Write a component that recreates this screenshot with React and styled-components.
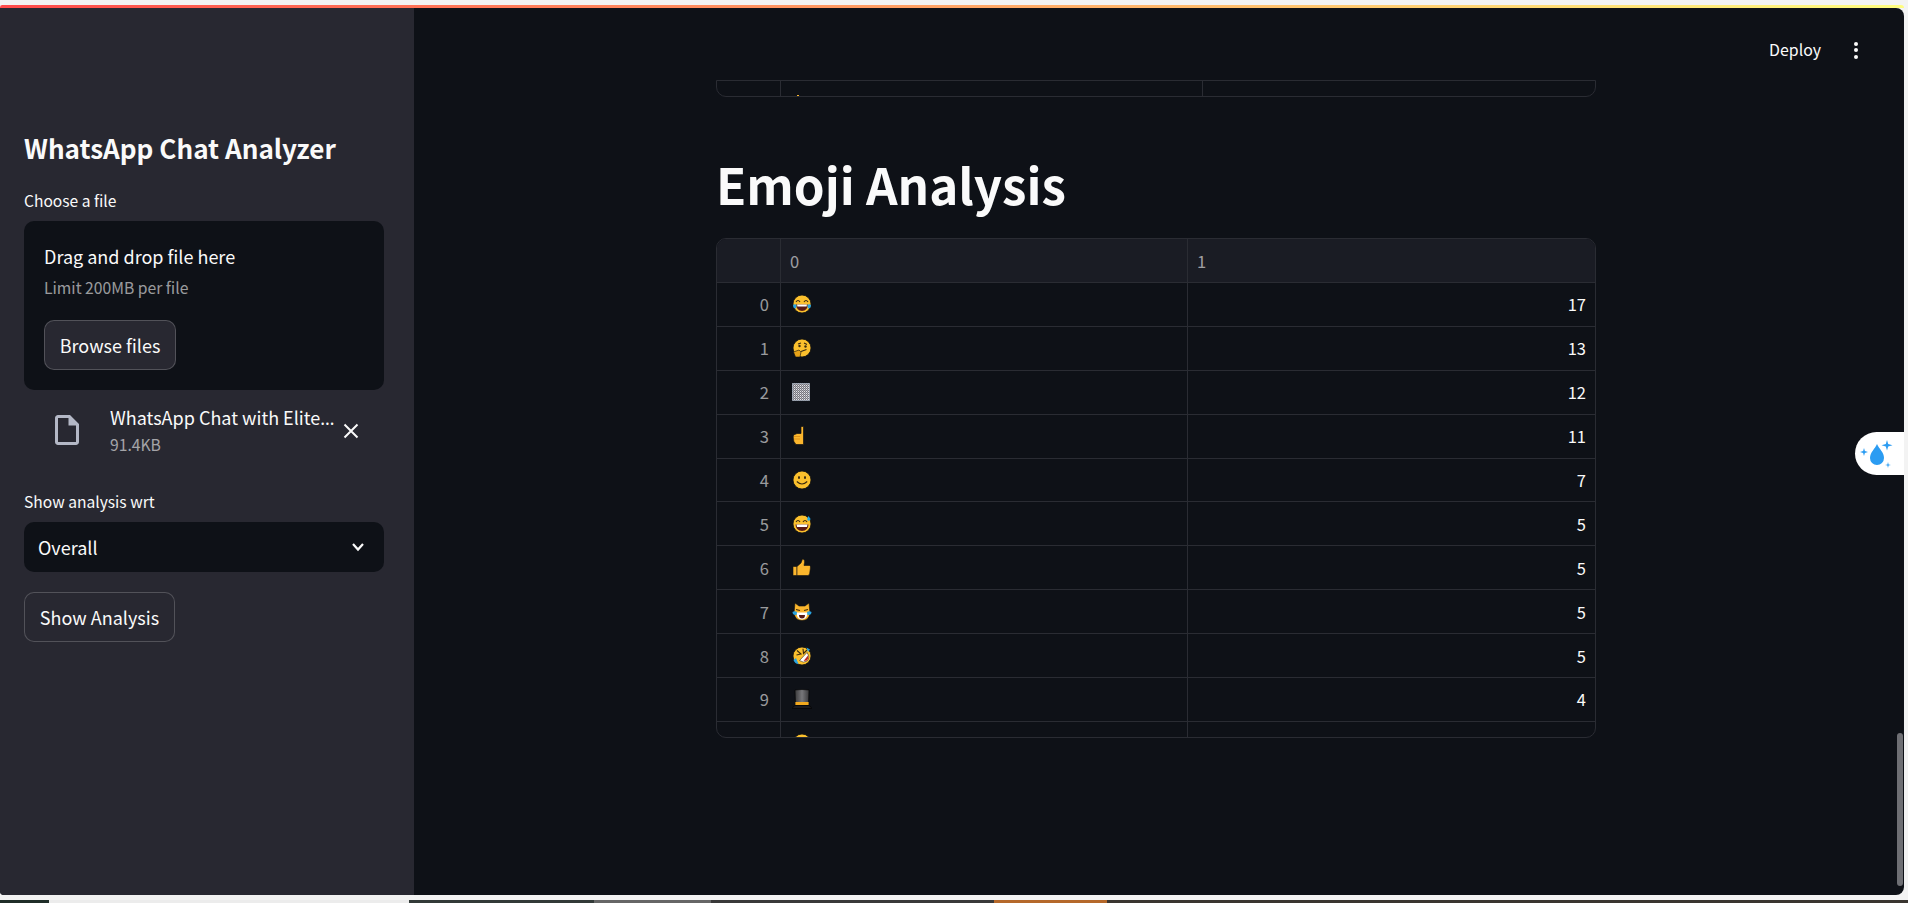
import React from "react";
import styled, { createGlobalStyle } from "styled-components";

const FONT = `"Noto Sans CJK SC", "Noto Sans", sans-serif`;

const GlobalStyle = createGlobalStyle`
  html, body {
    margin: 0;
    padding: 0;
    height: 903px;
    overflow: hidden;
    background: #f3f3f3;
  }
  * { box-sizing: border-box; }
`;

const Face = ({ children, fill = "#fbc02d" }) => (
  <svg width="20" height="20" viewBox="0 0 20 20">
    <circle cx="10" cy="10" r="9" fill={fill} stroke="#111" strokeWidth="0.8" />
    {children}
  </svg>
);

const JoyEmoji = () => (
  <Face>
    <path d="M4 8 Q6 5 8 8M12 8 Q14 5 16 8" stroke="#3a2a10" strokeWidth="1.2" fill="none" />
    <path d="M4 10.5 H16 Q15.5 17 10 17 Q4.5 17 4 10.5Z" fill="#5a1a14" />
    <path d="M5 10.5 H15 L14.6 12.5 H5.4Z" fill="#fff" />
    <path d="M1 11 Q3 9.6 4.6 11 L4 14.5 Q1 14.5 1 11ZM19 11 Q17 9.6 15.4 11 L16 14.5 Q19 14.5 19 11Z" fill="#29a3e0" />
  </Face>
);

const ThinkingEmoji = () => (
  <Face>
    <path d="M6 6 L9 5M12 5 L15 6.5" stroke="#3a2a10" strokeWidth="1.1" fill="none" />
    <circle cx="7.5" cy="8" r="1.2" fill="#3a2a10" />
    <circle cx="13.5" cy="8.5" r="1.2" fill="#3a2a10" />
    <path d="M9 13.5 L14.5 11.5" stroke="#3a2a10" strokeWidth="1.2" />
    <path d="M1.5 14 L7 12 L9 14 L8 19 L3.5 19Z" fill="#e8a317" stroke="#111" strokeWidth="0.6" />
  </Face>
);

const TofuEmoji = () => (
  <svg width="18" height="18" viewBox="0 0 18 18">
    <defs>
      <pattern id="tofu" width="2" height="2" patternUnits="userSpaceOnUse">
        <rect width="2" height="2" fill="#77777c" />
        <rect width="1" height="1" fill="#e4e4ea" />
        <rect x="1" y="1" width="1" height="1" fill="#a9a9b2" />
      </pattern>
    </defs>
    <rect x="0.5" y="0.5" width="17" height="17" fill="url(#tofu)" stroke="#dbe8fa" strokeDasharray="1 1" />
  </svg>
);

const PointUpEmoji = () => (
  <svg width="20" height="20" viewBox="0 0 20 20">
    <path d="M9 0.5 H11.5 V18.5 H4 Q1 16 1.2 11 L1.5 9 L5 7.5 L9 7.5Z" fill="#fbb62d" stroke="#111" strokeWidth="0.7" />
    <path d="M2 10.5 H8M2 13 H8" stroke="#d98a14" strokeWidth="0.8" />
  </svg>
);

const SmileEmoji = () => (
  <Face>
    <ellipse cx="7" cy="7.5" rx="1" ry="1.6" fill="#3a2a10" />
    <ellipse cx="13" cy="7.5" rx="1" ry="1.6" fill="#3a2a10" />
    <path d="M4.8 11.5 Q10 16.5 15.2 11.5" stroke="#3a2a10" strokeWidth="1.1" fill="none" />
  </Face>
);

const SweatEmoji = () => (
  <Face>
    <path d="M4 8 Q6 5 8 8M11 8 Q13 5 15 8" stroke="#3a2a10" strokeWidth="1.2" fill="none" />
    <path d="M3.5 10.5 H16.5 Q16 17 10 17 Q4 17 3.5 10.5Z" fill="#5a1a14" />
    <path d="M4.5 10.5 H15.5 L15 13 H5Z" fill="#fff" />
    <path d="M16.5 2 L18.6 5 Q18 7 16.3 6.8 Q14.8 6 15.3 4.4Z" fill="#1fa8e8" />
  </Face>
);

const ThumbEmoji = () => (
  <svg width="20" height="20" viewBox="0 0 20 20">
    <path d="M1 8.5 H5 V17.5 H1Z" fill="#fbb62d" stroke="#111" strokeWidth="0.6" />
    <path d="M5 8.5 L9 5 L10.5 1 Q13 1 12.5 4.5 L12 7.5 H17.5 Q18.8 8 18.4 10 L17.6 16 Q17 17.5 15.5 17.5 H5Z" fill="#fbb62d" stroke="#111" strokeWidth="0.6" />
  </svg>
);

const CatEmoji = () => (
  <svg width="20" height="20" viewBox="0 0 20 20">
    <path d="M3 1 L7 4 H13 L17 1 L18 11 Q17 18.5 10 18.5 Q3 18.5 2 11Z" fill="#fbb62d" stroke="#111" strokeWidth="0.6" />
    <path d="M4 7.5 L8 8.5M16 7.5 L12 8.5" stroke="#3a2a10" strokeWidth="1.1" />
    <path d="M4.5 10.5 H15.5 Q15 17.5 10 17.5 Q5 17.5 4.5 10.5Z" fill="#fff" />
    <path d="M7 13 H13 Q13 16.5 10 16.5 Q7 16.5 7 13Z" fill="#5a1a14" />
    <path d="M0.5 10 Q2.5 8.6 5 10 L4.5 13 Q0.5 13.5 0.5 10ZM19.5 10 Q17.5 8.6 15 10 L15.5 13 Q19.5 13.5 19.5 10Z" fill="#29a3e0" />
  </svg>
);

const RoflEmoji = () => (
  <Face>
    <path d="M5 4.5 L9 8 L4.5 9M11 2.8 L11.5 7.5 L15 4" stroke="#3a2a10" strokeWidth="1.1" fill="none" />
    <path d="M7.5 14.5 L15 6.5 Q18.5 11.5 15 15 Q11.5 17.5 7.5 14.5Z" fill="#fff" stroke="#3a2a10" strokeWidth="0.6" />
    <path d="M11.5 15 L16 9.5 Q17 12.5 15 14.5Z" fill="#c0281e" />
    <path d="M1.5 14 L4 12 L6.5 18 Q3 18 1.5 14ZM14.5 1.5 L18 3.5 L16 6Z" fill="#29a3e0" />
  </Face>
);

const HatEmoji = () => (
  <svg width="20" height="20" viewBox="0 0 20 20">
    <defs>
      <linearGradient id="hatBody" x1="0" x2="1" y1="0" y2="0">
        <stop offset="0" stopColor="#3a3a3c" />
        <stop offset="0.5" stopColor="#77777a" />
        <stop offset="1" stopColor="#3a3a3c" />
      </linearGradient>
    </defs>
    <path d="M3 1 Q10 0 17 1 L16.5 16.5 H3.5Z" fill="url(#hatBody)" stroke="#000" strokeWidth="0.6" />
    <rect x="3.4" y="13" width="13.2" height="3" fill="#f2a91e" />
    <path d="M0.3 19.5 Q1 16.8 3.5 16.5 H16.5 Q19 16.8 19.7 19.5Z" fill="#1b1b1e" stroke="#000" strokeWidth="0.6" />
  </svg>
);

const EMOJIS = [
  { icon: <JoyEmoji />, count: 17 },
  { icon: <ThinkingEmoji />, count: 13 },
  { icon: <TofuEmoji />, count: 12 },
  { icon: <PointUpEmoji />, count: 11 },
  { icon: <SmileEmoji />, count: 7 },
  { icon: <SweatEmoji />, count: 5 },
  { icon: <ThumbEmoji />, count: 5 },
  { icon: <CatEmoji />, count: 5 },
  { icon: <RoflEmoji />, count: 5 },
  { icon: <HatEmoji />, count: 4 },
];

const TASKBAR = [
  { width: 49, color: "#1f2d28" },
  { width: 360, color: "#ececec" },
  { width: 185, color: "#323a38" },
  { width: 117, color: "#666666" },
  { width: 283, color: "#393939" },
  { width: 113, color: "#b5682a" },
  { width: 801, color: "#3a3530" },
];

const App = () => {
  return (
    <Page>
      <GlobalStyle />
      <Decoration />
      <Shell>
        <Sidebar>
          <SideTitle>WhatsApp Chat Analyzer</SideTitle>
          <FieldLabel $top={22}>Choose a file</FieldLabel>
          <DropBox>
            <DropTitle>Drag and drop file here</DropTitle>
            <DropHint>Limit 200MB per file</DropHint>
            <ActionButton $top={22} $width={132}>Browse files</ActionButton>
          </DropBox>
          <FileRow>
            <svg width="36" height="36" viewBox="0 0 24 24" fill="#b4b8c6">
              <path d="M14 2H6c-1.1 0-1.99.9-1.99 2L4 20c0 1.1.89 2 1.99 2H18c1.1 0 2-.9 2-2V8l-6-6zM6 20V4h7v5h5v11H6z" />
            </svg>
            <FileInfo>
              <FileName>WhatsApp Chat with Elite<Dots>…</Dots></FileName>
              <FileSize>91.4KB</FileSize>
            </FileInfo>
            <svg width="16" height="16" viewBox="0 0 16 16" fill="none">
              <path d="M1.5 1.5 L14.5 14.5M14.5 1.5 L1.5 14.5" stroke="#fafafa" strokeWidth="2" />
            </svg>
          </FileRow>
          <FieldLabel $top={36}>Show analysis wrt</FieldLabel>
          <SelectBox>
            Overall
            <svg width="14" height="10" viewBox="0 0 14 10" fill="none">
              <path d="M2 2 L7 7.5 L12 2" stroke="#fafafa" strokeWidth="2.2" />
            </svg>
          </SelectBox>
          <ActionButton $top={20} $width={151}>Show Analysis</ActionButton>
        </Sidebar>
        <Main>
          <Toolbar>
            <DeployText>Deploy</DeployText>
            <DotsMenu>
              <i />
              <i />
              <i />
            </DotsMenu>
          </Toolbar>
          <Content>
            <TableTail>
              <TailCell $width={64} />
              <TailCell $width={422}>
                <TailSpeck />
              </TailCell>
              <TailCell $width={394} $last />
            </TableTail>
            <Heading>Emoji Analysis</Heading>
            <DataTable>
              <HeaderRow>
                <Cell />
                <HeaderCell>0</HeaderCell>
                <HeaderCell $last>1</HeaderCell>
              </HeaderRow>
              {EMOJIS.map((row, index) => (
                <Row key={index}>
                  <IndexCell>{index}</IndexCell>
                  <EmojiCell>{row.icon}</EmojiCell>
                  <CountCell>{row.count}</CountCell>
                </Row>
              ))}
              <Row>
                <IndexCell />
                <EmojiCell><SmileEmoji /></EmojiCell>
                <CountCell />
              </Row>
            </DataTable>
          </Content>
          <FloatWidget>
            <svg width="36" height="30" viewBox="0 0 36 30">
              <path d="M19 5 C21 10 26 13 26 19 A7 7 0 0 1 12 19 C12 13 17 10 19 5Z" fill="#2b9cf2" />
              <path d="M29 1 L30.2 5 L34.5 6.2 L30.2 7.5 L29 11.5 L27.8 7.5 L23.5 6.2 L27.8 5Z" fill="#2b9cf2" />
              <path d="M6 9 L6.9 12.1 L10 13 L6.9 13.9 L6 17 L5.1 13.9 L2 13 L5.1 12.1Z" fill="#2b9cf2" />
              <path d="M30 23 L30.6 25.4 L33 26 L30.6 26.6 L30 29 L29.4 26.6 L27 26 L29.4 25.4Z" fill="#2b9cf2" />
            </svg>
          </FloatWidget>
          <ScrollThumb />
        </Main>
      </Shell>
      <Taskbar>
        {TASKBAR.map((item, index) => (
          <TaskItem key={index} $width={item.width} $color={item.color} />
        ))}
      </Taskbar>
    </Page>
  );
};

export default App;

const Page = styled.div`
  width: 1908px;
  height: 903px;
  display: flex;
  flex-direction: column;
  padding: 5px 4px 0 0;
  background: #f3f3f3;
  font-family: ${FONT};
  color: #fafafa;
`;

const Decoration = styled.div`
  height: 3px;
  flex-shrink: 0;
  border-radius: 8px 10px 0 0;
  background: linear-gradient(90deg, #ff4b4b, #fffd80);
`;

const Shell = styled.div`
  height: 887px;
  flex-shrink: 0;
  display: flex;
  background: #0e1117;
  border-radius: 0 8px 8px 4px;
  overflow: hidden;
`;

const Sidebar = styled.aside`
  width: 414px;
  flex-shrink: 0;
  padding: 120px 30px 0 24px;
  background: #282831;
`;

const SideTitle = styled.h2`
  margin: 0;
  font-size: 26.1px;
  line-height: 40px;
  font-weight: 600;
  color: #fafafa;
`;

const FieldLabel = styled.div`
  margin-top: ${p => p.$top}px;
  margin-bottom: 11px;
  font-size: 15.6px;
  line-height: 20px;
  color: #fafafa;
`;

const DropBox = styled.div`
  height: 169px;
  padding: 23px 20px 20px;
  background: #0e1117;
  border-radius: 10px;
`;

const DropTitle = styled.div`
  font-size: 18px;
  line-height: 24px;
`;

const DropHint = styled.div`
  margin-top: 10px;
  font-size: 15.7px;
  line-height: 20px;
  color: rgba(250, 250, 250, 0.6);
`;

const ActionButton = styled.button`
  display: block;
  width: ${p => p.$width}px;
  height: 50px;
  margin-top: ${p => p.$top}px;
  padding: 0 0 1px;
  font-family: inherit;
  font-size: 18px;
  color: #fafafa;
  background: #282831;
  border: 1px solid rgba(250, 250, 250, 0.2);
  border-radius: 10px;
`;

const FileRow = styled.div`
  display: flex;
  align-items: center;
  height: 49px;
  margin-top: 16px;
  padding-left: 25px;

  svg:first-child {
    flex-shrink: 0;
    margin-right: 25px;
    margin-top: -2px;
  }

  svg:last-child {
    flex-shrink: 0;
    margin-left: 5px;
    margin-top: 1px;
  }
`;

const FileInfo = styled.div`
  width: 228px;
  min-width: 0;
  padding-bottom: 2px;
`;

const FileName = styled.div`
  font-size: 18px;
  line-height: 24px;
  white-space: nowrap;
  overflow: hidden;
`;

const Dots = styled.span`
  font-family: "Noto Sans", sans-serif;
`;

const FileSize = styled.div`
  margin-top: 5px;
  font-size: 15.7px;
  line-height: 20px;
  color: rgba(250, 250, 250, 0.6);
`;

const SelectBox = styled.div`
  display: flex;
  align-items: center;
  justify-content: space-between;
  height: 50px;
  padding: 0 19px 1px 14px;
  font-size: 18px;
  background: #0e1117;
  border-radius: 10px;
`;

const Main = styled.main`
  position: relative;
  flex: 1;
  min-width: 0;
`;

const Toolbar = styled.div`
  position: absolute;
  top: 27px;
  right: 46px;
  display: flex;
  align-items: center;
  gap: 33px;
  height: 30px;
`;

const DeployText = styled.span`
  padding-bottom: 2px;
  font-size: 15.9px;
  color: #fafafa;
`;

const DotsMenu = styled.div`
  display: flex;
  flex-direction: column;
  gap: 2.5px;

  i {
    display: block;
    width: 4px;
    height: 4px;
    border-radius: 50%;
    background: #fafafa;
  }
`;

const Content = styled.div`
  width: 880px;
  margin: 0 0 0 302px;
  padding-top: 72px;
`;

const TableTail = styled.div`
  display: flex;
  height: 17px;
  border: 1px solid #2a2c33;
  border-radius: 0 0 10px 10px;
`;

const TailCell = styled.div`
  position: relative;
  flex: ${p => (p.$last ? 1 : "none")};
  width: ${p => p.$width}px;
  border-right: ${p => (p.$last ? "none" : "1px solid #2a2c33")};
`;

const TailSpeck = styled.span`
  position: absolute;
  left: 16px;
  bottom: 0;
  width: 2px;
  height: 1px;
  background: #fbb62d;
`;

const Heading = styled.h1`
  margin: 52px 0 0;
  height: 89px;
  font-size: 49.3px;
  line-height: 70px;
  font-weight: 700;
  color: #fafafa;
`;

const DataTable = styled.div`
  height: 500px;
  overflow: hidden;
  border: 1px solid #2a2c33;
  border-radius: 10px;
`;

const Row = styled.div`
  display: grid;
  grid-template-columns: 64px 407px 1fr;
  height: 43.9px;
  border-bottom: 1px solid #2a2c33;
`;

const HeaderRow = styled(Row)`
  height: 44px;
  background: #1a1c24;
`;

const Cell = styled.div`
  display: flex;
  align-items: center;
  min-width: 0;
  font-size: 16.5px;
  border-right: 1px solid #2a2c33;
`;

const HeaderCell = styled(Cell)`
  padding-left: 9px;
  color: rgba(250, 250, 250, 0.6);
  border-right: ${p => (p.$last ? "none" : "1px solid #2a2c33")};
`;

const IndexCell = styled(Cell)`
  justify-content: flex-end;
  padding-right: 11px;
  color: rgba(250, 250, 250, 0.6);
`;

const EmojiCell = styled(Cell)`
  padding-left: 11px;
`;

const CountCell = styled(Cell)`
  justify-content: flex-end;
  padding-right: 9px;
  border-right: none;
  color: #fafafa;
`;

const FloatWidget = styled.div`
  position: absolute;
  top: 424px;
  right: 0;
  width: 49px;
  height: 43px;
  display: flex;
  align-items: center;
  padding-left: 3px;
  background: #ffffff;
  border-radius: 22px 0 0 22px;
`;

const ScrollThumb = styled.div`
  position: absolute;
  top: 725px;
  right: 1px;
  width: 6px;
  height: 153px;
  background: #6e6f74;
  border-radius: 4px;
`;

const Taskbar = styled.div`
  display: flex;
  width: 1908px;
  height: 3px;
  margin-top: 5px;
  flex-shrink: 0;
`;

const TaskItem = styled.div`
  width: ${p => p.$width}px;
  background: ${p => p.$color};
`;
